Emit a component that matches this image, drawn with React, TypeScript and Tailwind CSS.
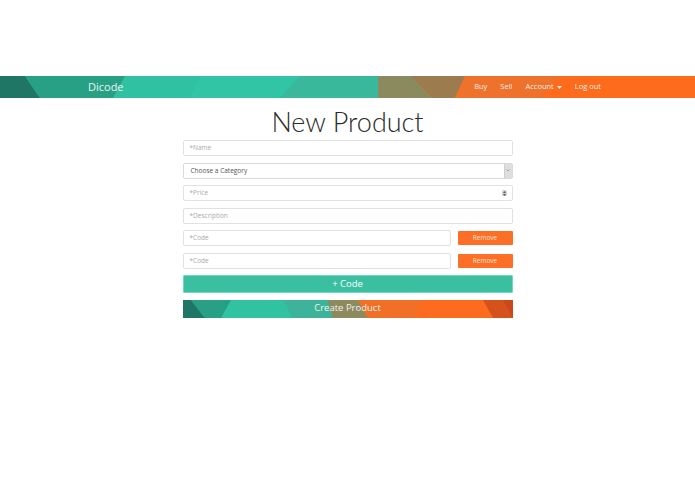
import React from 'react';

const font = { fontFamily: '"Open Sans", "Liberation Sans", sans-serif' };
const titleFont = { fontFamily: 'Lato, "Open Sans", sans-serif' };

function NavBackground() {
  return (
    <svg className="absolute inset-0 h-full w-full" viewBox="0 0 695 22" preserveAspectRatio="none">
      <rect x="0" y="0" width="695" height="22" fill="#fd6d1f" />
      <polygon points="0,0 440,0 400,22 0,22" fill="#2fc1a2" />
      <polygon points="0,0 25,0 40,22 0,22" fill="#1f7664" />
      <polygon points="25,0 125,0 113,22 40,22" fill="#28a085" />
      <polygon points="200,0 300,0 280,22 190,22" fill="#32c5a5" />
      <polygon points="300,0 378,0 378,22 280,22" fill="#3ab89c" />
      <polygon points="378,0 410,0 432,22 378,22" fill="#8a8a5e" />
      <polygon points="410,0 465,0 455,22 432,22" fill="#9c7c4e" />
      <polygon points="465,0 560,0 540,22 455,22" fill="#ee712c" />
      <polygon points="560,0 695,0 695,22 540,22" fill="#fd6b1d" />
    </svg>
  );
}

function ButtonBackground() {
  return (
    <svg className="absolute inset-0 h-full w-full" viewBox="0 0 330 18" preserveAspectRatio="none">
      <rect x="0" y="0" width="330" height="18" fill="#fb6e20" />
      <polygon points="0,0 145,0 140,18 0,18" fill="#31c2a2" />
      <polygon points="0,0 8,0 22,18 0,18" fill="#1e7766" />
      <polygon points="8,0 48,0 38,18 22,18" fill="#27a086" />
      <polygon points="100,0 145,0 150,18 110,18" fill="#3cb39a" />
      <polygon points="145,0 175,0 185,18 150,18" fill="#8c8a5e" />
      <polygon points="175,0 240,0 230,18 185,18" fill="#f26f28" />
      <polygon points="240,0 320,0 310,18 230,18" fill="#fd6c1e" />
      <polygon points="300,0 330,0 330,18 310,18" fill="#d6521d" />
      <polygon points="320,0 330,0 330,18" fill="#c9491a" />
    </svg>
  );
}

function TextInput({ placeholder, right, className = '' }: { placeholder: string; right?: React.ReactNode; className?: string }) {
  return (
    <div className={`flex h-4 items-center justify-between rounded-[2px] border border-[#e1e1e1] bg-white pl-[6px] pr-[5px] ${className}`}>
      <span className="text-[6.5px] text-[#a9a9a9]">{placeholder}</span>
      {right}
    </div>
  );
}

export default function App() {
  return (
    <div className="min-h-[494px] bg-white pt-[76px]" style={font}>
      <nav className="relative h-[22px] w-full overflow-hidden">
        <NavBackground />
        <div className="relative flex h-full items-center justify-between pl-[88px] pr-[94px]">
          <span className="text-[11px] text-[#e8f7f2]">Dicode</span>
          <div className="flex items-center gap-[13px] text-[7.5px] text-[#fbeee4]">
            <span>Buy</span>
            <span>Sell</span>
            <span className="flex items-center gap-[3px]">
              Account
              <svg width="5" height="3" viewBox="0 0 5 3">
                <polygon points="0,0 5,0 2.5,3" fill="#fbeee4" />
              </svg>
            </span>
            <span>Log out</span>
          </div>
        </div>
      </nav>

      <main className="mx-auto w-[330px]">
        <h1 className="mt-[5px] text-center text-[27px] font-light leading-[37px] text-[#2b2b2b]" style={titleFont}>New Product</h1>
        <div className="flex flex-col gap-[6.5px]">
          <TextInput placeholder="*Name" />
          <div className="flex h-4 items-center justify-between overflow-hidden rounded-[2px] border border-[#d9d9d9] bg-white pl-[7px]">
            <span className="text-[6.5px] text-[#555]">Choose a Category</span>
            <div className="flex h-full w-[8px] items-center justify-center border-l border-[#cfcfcf] bg-[#dedede]">
              <svg width="4" height="3" viewBox="0 0 4 3">
                <path d="M0.5 0.5 L2 2 L3.5 0.5" stroke="#888" strokeWidth="0.7" fill="none" />
              </svg>
            </div>
          </div>
          <TextInput
            placeholder="*Price"
            right={
              <div className="flex h-[6px] w-[5px] flex-col items-center justify-center gap-[1px] rounded-[1px] bg-[#d5d5d5]">
                <svg width="3" height="2" viewBox="0 0 3 2">
                  <polygon points="0,2 3,2 1.5,0" fill="#555" />
                </svg>
                <svg width="3" height="2" viewBox="0 0 3 2">
                  <polygon points="0,0 3,0 1.5,2" fill="#555" />
                </svg>
              </div>
            }
          />
          <TextInput placeholder="*Description" />
          {[0, 1].map((i) => (
            <div key={i} className="flex items-center gap-[7px]">
              <TextInput placeholder="*Code" className="flex-1" />
              <button className="h-[14px] w-[55px] rounded-[1px] bg-[#fd6e26] text-[6.5px] text-[#fde3d4]">Remove</button>
            </div>
          ))}
          <button className="h-[18px] w-full rounded-[1px] border border-[#6fd8bf] bg-[#3bbfa1] text-[9.5px] text-white">+ Code</button>
          <button className="relative h-[18px] w-full overflow-hidden text-[9.5px] text-[#f3f3ee]">
            <ButtonBackground />
            <span className="relative">Create Product</span>
          </button>
        </div>
      </main>
    </div>
  );
}
